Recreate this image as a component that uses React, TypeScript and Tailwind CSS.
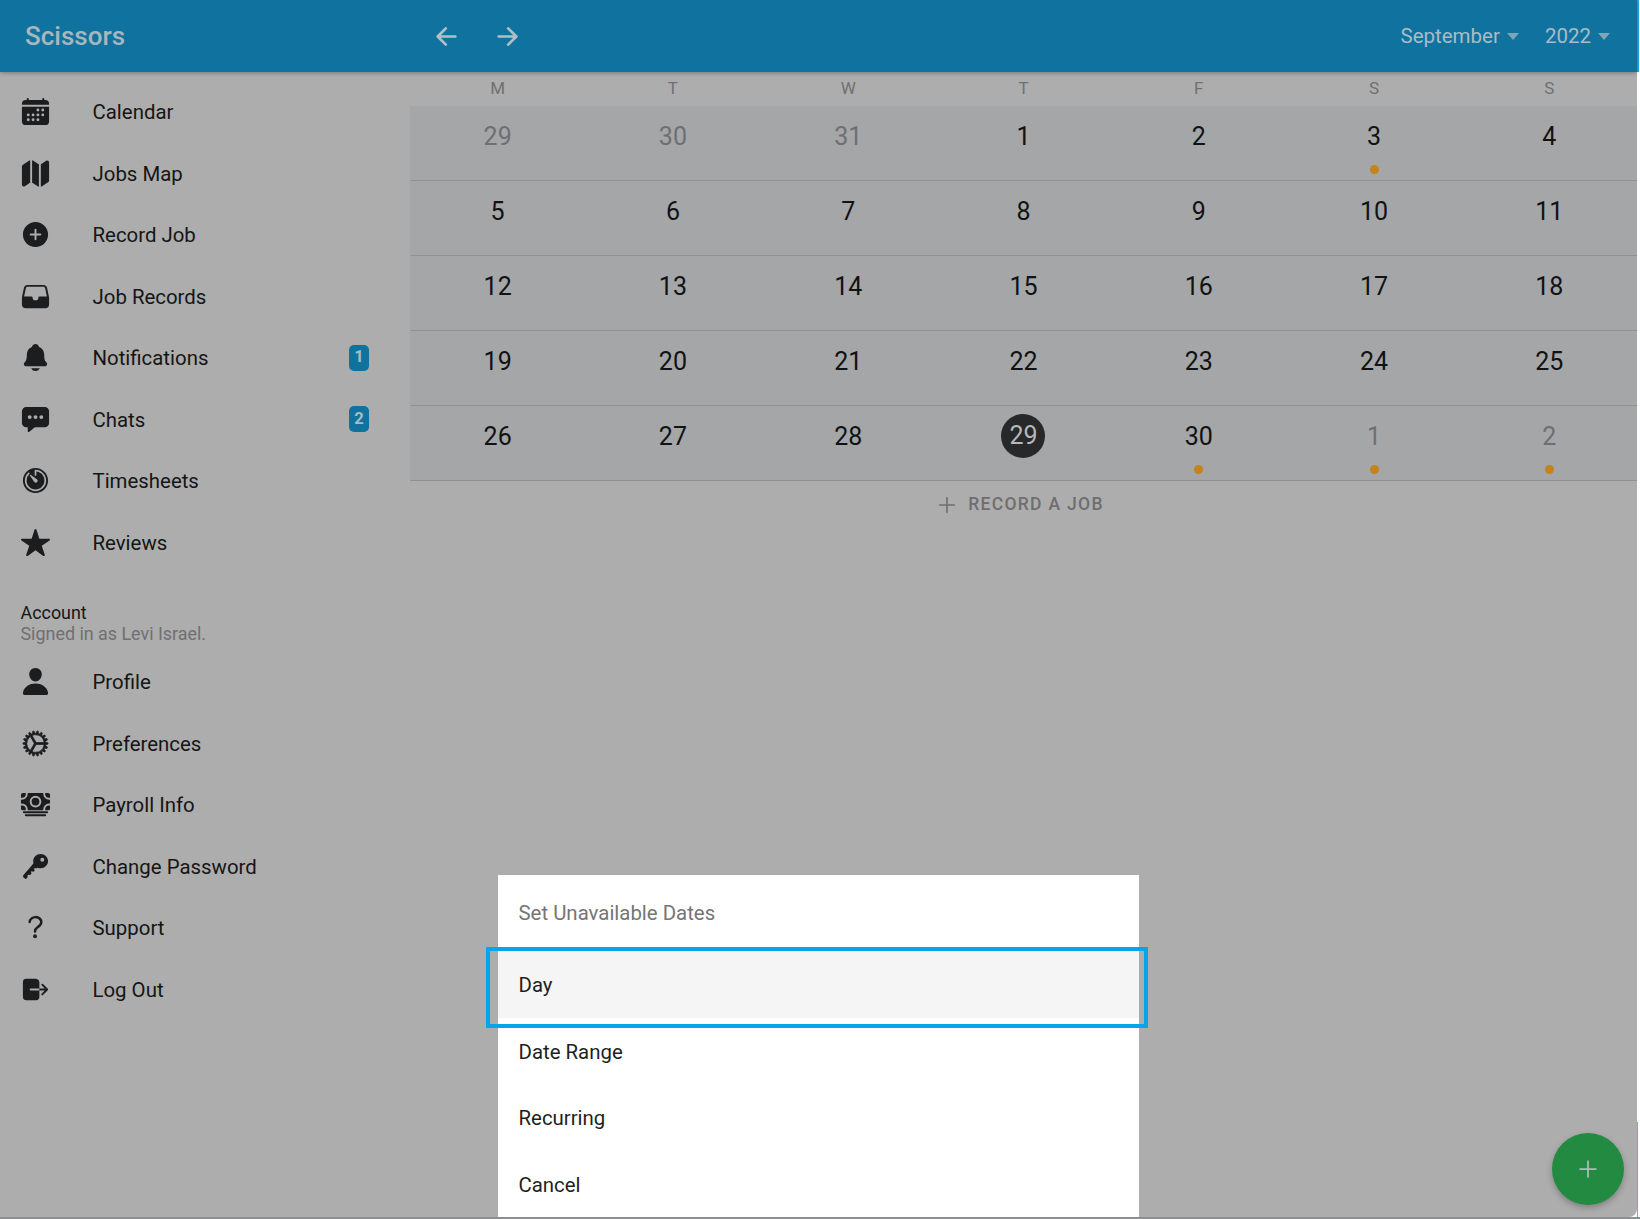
import {
  IoAdd,
  IoAddCircle,
  IoArrowBack,
  IoArrowForward,
  IoCalendar,
  IoCash,
  IoChatboxEllipses,
  IoCogOutline,
  IoFileTray,
  IoHelp,
  IoKey,
  IoLogOut,
  IoMap,
  IoNotifications,
  IoPerson,
  IoStar,
  IoTimer,
} from "react-icons/io5";
import type { IconType } from "react-icons";

type NavItem = { label: string; icon: IconType; badge?: number; heavy?: boolean };

const mainNav: NavItem[] = [
  { label: "Calendar", icon: IoCalendar },
  { label: "Jobs Map", icon: IoMap },
  { label: "Record Job", icon: IoAddCircle },
  { label: "Job Records", icon: IoFileTray },
  { label: "Notifications", icon: IoNotifications, badge: 1 },
  { label: "Chats", icon: IoChatboxEllipses, badge: 2 },
  { label: "Timesheets", icon: IoTimer },
  { label: "Reviews", icon: IoStar },
];

const accountNav: NavItem[] = [
  { label: "Profile", icon: IoPerson },
  { label: "Preferences", icon: IoCogOutline, heavy: true },
  { label: "Payroll Info", icon: IoCash },
  { label: "Change Password", icon: IoKey },
  { label: "Support", icon: IoHelp },
  { label: "Log Out", icon: IoLogOut },
];

const weekDays = ["M", "T", "W", "T", "F", "S", "S"];

type Day = { n: number; muted?: boolean; dot?: boolean; today?: boolean };

const weeks: Day[][] = [
  [
    { n: 29, muted: true },
    { n: 30, muted: true },
    { n: 31, muted: true },
    { n: 1 },
    { n: 2 },
    { n: 3, dot: true },
    { n: 4 },
  ],
  [5, 6, 7, 8, 9, 10, 11].map((n) => ({ n })),
  [12, 13, 14, 15, 16, 17, 18].map((n) => ({ n })),
  [19, 20, 21, 22, 23, 24, 25].map((n) => ({ n })),
  [
    { n: 26 },
    { n: 27 },
    { n: 28 },
    { n: 29, today: true },
    { n: 30, dot: true },
    { n: 1, muted: true, dot: true },
    { n: 2, muted: true, dot: true },
  ],
];

function NavRow({ item }: { item: NavItem }) {
  const Icon = item.icon;
  return (
    <div className="flex h-[61.5px] items-center pr-[41px]">
      <div className="flex w-[71px] justify-center">
        <Icon className={`text-[31px] text-[#1c1d1f] ${item.heavy ? "[&_path]:[stroke-width:12]" : ""}`} />
      </div>
      <span className="ml-[21.5px] pt-[2px] text-[20.4px] text-[#151515]">{item.label}</span>
      {item.badge && (
        <span className="ml-auto flex h-[26px] w-[20px] items-center justify-center rounded-[5px] bg-[#10739f] text-[16.5px] font-bold text-[#a9bcc6]">
          {item.badge}
        </span>
      )}
    </div>
  );
}

function Caret() {
  return <span className="ml-[7px] mt-[1px] h-0 w-0 border-x-[6px] border-t-[7px] border-x-transparent border-t-[#7fa5b8]" />;
}

function DayCell({ day }: { day: Day }) {
  return (
    <div className="relative flex h-full flex-col items-center pt-[8px]">
      {day.today ? (
        <span className="flex h-[44px] w-[44px] items-center justify-center rounded-full bg-[#27282a] text-[25px] text-[#b7b7b7]">
          {day.n}
        </span>
      ) : (
        <span className={`flex h-[44px] items-center pt-[2px] text-[25px] ${day.muted ? "text-[#6e6f73]" : "text-[#111214]"}`}>
          {day.n}
        </span>
      )}
      {day.dot && <span className="mt-[7px] h-[9px] w-[9px] rounded-full bg-[#c4831b]" />}
    </div>
  );
}

export default function App() {
  return (
    <div className="relative flex h-[1219px] w-[1640px] flex-col overflow-hidden bg-white font-[family-name:Roboto,sans-serif]">
      <div className="flex h-[1217px] w-full">
        <div className="flex h-full w-[1637px] flex-col rounded-br-[8px] bg-[#adadad]">
          <header className="z-10 flex h-[72px] shrink-0 items-center bg-[#10739f] shadow-[0_1px_4px_rgba(0,0,0,0.3)]">
            <div className="w-[410px] pl-[25px] text-[26px] font-medium text-[#a9b6bd]">Scissors</div>
            <div className="flex items-center gap-[32px] pl-[22px] text-[#b0bfc7]">
              <IoArrowBack className="text-[29px]" />
              <IoArrowForward className="text-[29px]" />
            </div>
            <div className="ml-auto flex items-center pr-[27px] text-[20.5px] text-[#a8bcc6]">
              <span>September</span>
              <Caret />
              <span className="ml-[26px]">2022</span>
              <Caret />
            </div>
          </header>

          <div className="flex min-h-0 flex-1">
            <aside className="w-[410px] shrink-0 pt-[9px]">
              {mainNav.map((item) => (
                <NavRow key={item.label} item={item} />
              ))}
              <div className="px-[20.5px] pb-[7px] pt-[29px]">
                <div className="text-[17.9px] leading-[21px] text-[#151515]">Account</div>
                <div className="text-[17.9px] leading-[21px] text-[#6f7072]">Signed in as Levi Israel.</div>
              </div>
              {accountNav.map((item) => (
                <NavRow key={item.label} item={item} />
              ))}
            </aside>

            <main className="min-w-0 flex-1">
              <div className="grid h-[34px] grid-cols-7 items-center text-center text-[17px] text-[#707072]">
                {weekDays.map((d, i) => (
                  <span key={i}>{d}</span>
                ))}
              </div>
              {weeks.map((week, i) => (
                <div key={i} className="grid h-[75px] grid-cols-7 border-b border-[#909193] bg-[#a5a6a8]">
                  {week.map((day, j) => (
                    <DayCell key={j} day={day} />
                  ))}
                </div>
              ))}
              <div className="flex h-[47px] items-center justify-center pr-[9px] text-[17.5px] font-medium tracking-[1.3px] text-[#6e6e70]">
                <IoAdd className="mr-[8px] text-[26px]" />
                <span>RECORD A JOB</span>
              </div>
            </main>
          </div>
        </div>
        <div className="flex w-[3px] flex-col justify-between">
          <span className="h-[72px] w-[2px] bg-[#1fa9ef]" />
          <span className="h-[95px] w-[1px] bg-[#4db5e8]" />
        </div>
      </div>
      <div className="h-[2px] bg-[#8d8f90]" />

      {/* action sheet */}
      <div className="absolute left-[498px] top-[875px] flex h-[342px] w-[641px] flex-col bg-white text-[20.4px] text-[#1f1f1f]">
        <div className="flex h-[76px] shrink-0 items-center pl-[20.5px] text-[#757575]">Set Unavailable Dates</div>
        <div className="flex h-[67px] shrink-0 items-center bg-[#f5f5f5] pl-[20.5px] pt-[2px]">Day</div>
        <div className="flex h-[66px] shrink-0 items-center pl-[20.5px] pt-[2px]">Date Range</div>
        <div className="flex h-[67px] shrink-0 items-center pl-[20.5px] pt-[2px]">Recurring</div>
        <div className="flex h-[66px] shrink-0 items-center pl-[20.5px] pt-[2px]">Cancel</div>
      </div>
      <div className="absolute left-[486px] top-[947px] h-[81px] w-[662px] border-4 border-[#05a5ec]" />

      <button className="absolute left-[1552px] top-[1133px] flex h-[72px] w-[72px] items-center justify-center rounded-full bg-[#238a41] text-[#b5b9b6] shadow-[0_3px_6px_rgba(0,0,0,0.25)]">
        <IoAdd className="text-[28px]" />
      </button>
    </div>
  );
}
